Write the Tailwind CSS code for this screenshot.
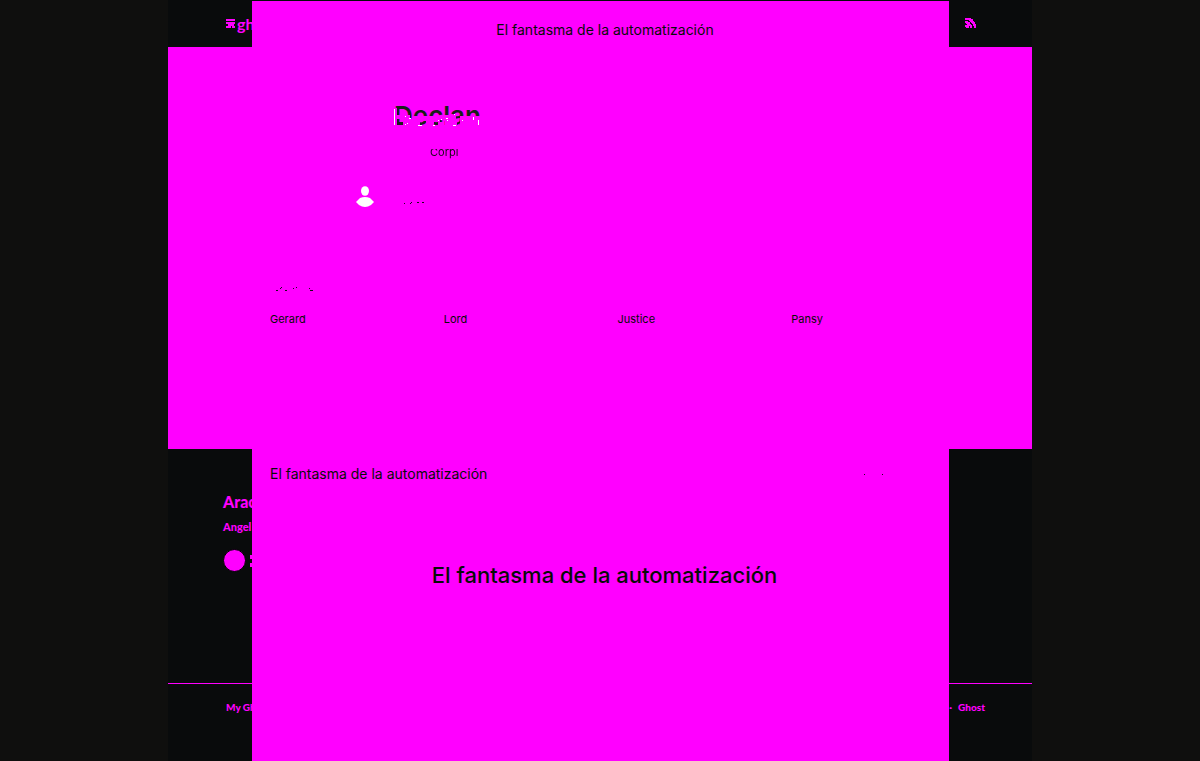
<!DOCTYPE html>
<html lang="es">
<head>
<meta charset="utf-8">
<meta name="viewport" content="width=device-width, initial-scale=1">
<title>El fantasma de la automatización</title>
<script src="https://cdn.jsdelivr.net/npm/@tailwindcss/browser@4"></script>
</head>
<body class="grid min-h-screen bg-[#0f0f0e] font-['Lato',sans-serif] text-[#080c08]">
  <!-- Page behind the panel -->
  <div class="col-start-1 row-start-1 mx-auto flex w-[72%] flex-col bg-[#090b0c] text-[#ff00ff]">
    <header class="flex h-[47px] items-center justify-between pr-14 pl-[58px]">
      <a href="#" class="flex items-center gap-[2px] text-base leading-none font-bold">
        <svg class="size-[9px]" viewBox="0 0 9 9" fill="currentColor" aria-hidden="true"><path d="M0 0h9v2H0zM0 3h9v2H8v2h1v2H6V7H5v2H0V7h2V5H0z"/></svg>
        <span>gh</span>
      </a>
      <a href="#" aria-label="RSS">
        <svg class="size-[11px]" viewBox="0 0 11 11" fill="currentColor"><path d="M0 0h6v1h2v2h1v1h1v2h1v4H9V8H8V6H7V5H6V4H5V3H4V2H0zM0 3h3v1h2v2h1v1h1v3H5V8H4v2H1V9H0V7h2V6H1V5H0z"/></svg>
      </a>
    </header>
    <section class="h-[402px] bg-[#ff00ff]"></section>
    <article class="flex h-[234px] flex-col pt-[43px] pl-[55px]">
      <h2 class="text-base leading-5 font-black">Arac</h2>
      <p class="mt-[7px] text-[11px] leading-4 font-black">Angel</p>
      <div class="mt-[14px] flex items-center gap-1">
        <span class="size-[23px] rounded-full border border-black bg-[#ff00ff]"></span>
        <span class="flex flex-col gap-1"><i class="h-1 w-[3px] bg-[#ff00ff]"></i><i class="h-1 w-[3px] bg-[#ff00ff]"></i></span>
      </div>
    </article>
    <footer class="flex grow justify-between border-t border-[#ff00ff] pt-[15px] pr-[47px] pl-[58px] text-[10px] leading-4 font-black">
      <span>My Gh</span>
      <span class="flex gap-[6px]"><span>·</span><a href="#">Ghost</a></span>
    </footer>
  </div>

  <!-- Front panel -->
  <main class="z-10 col-start-1 row-start-1 mt-px ml-[21%] flex w-full max-w-[697px] flex-col bg-[#ff00ff] font-['Inter',sans-serif]">
    <header class="pt-[19px] pl-[9px] text-center text-[14px] leading-5 font-normal">El fantasma de la automatización</header>
    <section class="flex flex-col pt-[58px]">
      <div class="relative ml-[142px] self-start">
        <h1 class="text-[26px] leading-9 font-semibold text-[#182018]">Declan</h1>
        <!-- Worn edges of the title -->
        <svg class="absolute top-2 left-0 h-5 w-[86px]" viewBox="0 0 86 20" aria-hidden="true">
          <path fill="#ff00ff" d="M0 2h3v18H0zM3 9h13v4H3zM9 13h9v7H9zM18 10h14v5H18zM18 15h8v5h-8zM32 10h14v6H32zM32 16h8v4h-8zM44 16h5v4h-5zM49 9h4v4h-4zM50 9h12v6H50zM51 15h12v5H51zM66 10h20v10H66z"/>
          <path fill="white" d="M0 3h1v16H0zM11 10h1v1h-1zM15 12h2v1h-2zM13 17h1v1h-1zM11 18h1v1h-1zM24 19h4v1h-4zM39 19h2v1h-2zM44 14h1v1h-1zM47 13h1v1h-1zM52 12h2v1h-2zM53 14h1v1h-1zM59 19h3v1h-3zM60 8h1v1h-1zM68 14h1v1h-1zM79 11h1v3h-1zM84 14h1v5h-1z"/>
        </svg>
      </div>
      <p class="mt-2 ml-[178px] self-start bg-linear-to-b from-[#ff00ff] from-35% to-[#180818] to-35% bg-clip-text text-[11px] leading-5 font-normal text-transparent">Corpi</p>
      <div class="mt-6 ml-[104px] flex items-center gap-[30px]">
        <svg class="h-[22px] w-[18px]" viewBox="0 0 18 22" fill="white" role="img" aria-label="Perfil"><ellipse cx="9" cy="5" rx="4" ry="4.8"/><path d="M0 16l4-4q5-2 10 0l4 4-3 3q-6 4-12 0z"/></svg>
        <svg class="mt-3 h-1 w-5" viewBox="0 0 20 4" fill="#180818" aria-hidden="true"><path d="M0 2h1v1H0zM6 2h1v1H6zM7 1h1v1H7zM13 1h2v1h-2zM18 1h2v1h-2z"/></svg>
      </div>
    </section>
    <section class="px-[18px] pt-[78px]">
      <svg class="ml-[6px] h-[6px] w-[38px]" viewBox="0 0 38 6" fill="#180818" aria-hidden="true"><path d="M0 4h2v1H0zM4 2h1v1H4zM5 1h1v1H5zM9 4h2v1H9zM17 2h1v1h-1zM20 1h1v1h-1zM33 2h1v1h-1zM34 4h3v1h-3z"/></svg>
      <ul class="mt-[17px] -mr-[34px] grid grid-cols-4 text-[11px] leading-5 font-normal">
        <li>Gerard</li>
        <li>Lord</li>
        <li>Justice</li>
        <li>Pansy</li>
      </ul>
    </section>
    <section class="flex items-center justify-between pt-[135px] pr-[66px] pl-[18px]">
      <h2 class="text-[14px] leading-5 font-normal">El fantasma de la automatización</h2>
      <span class="flex gap-[17px]"><i class="size-px bg-[#180818]"></i><i class="size-px bg-[#180818]"></i></span>
    </section>
    <h2 class="pt-[75px] pl-[8px] text-center text-[22px] leading-8 font-medium">El fantasma de la automatización</h2>
  </main>
</body>
</html>
